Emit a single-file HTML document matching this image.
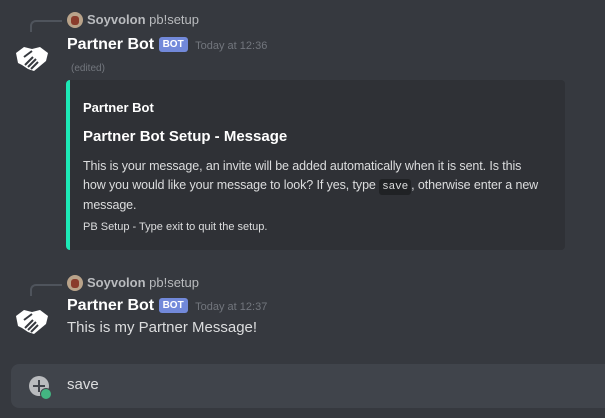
<!DOCTYPE html>
<html><head><style>
body{margin:0;width:605px;height:418px;background:#36393f;font-family:"Liberation Sans",sans-serif;position:relative;overflow:hidden;color:#dcddde}
.a{position:absolute;white-space:nowrap}
.ref{border-left:2px solid #4f545c;border-top:2px solid #4f545c;border-top-left-radius:6px;width:30px;height:10px;position:absolute}
.av{width:16px;height:16px;border-radius:50%;background:#b9a38a;position:absolute;overflow:hidden}
.av:after{content:"";position:absolute;left:4px;top:4px;width:8px;height:9px;background:#8a3c2c;border-radius:3px}
.bot{background:#7289da;color:#fff;font-size:10px;border-radius:3px;padding:1px 4px;display:inline-block;line-height:13px}
</style></head><body>
<div class="ref" style="left:30px;top:20px"></div>
<div class="av" style="left:67px;top:12px"></div>
<div class="a" style="left:87px;top:12px;font-size:13px;color:#b9bbbe"><b>Soyvolon</b> pb!setup</div>
<svg class="a" style="left:12px;top:43px" width="40" height="30" viewBox="0 0 40 30"><path d="M4 10 L12 4 L20 6 L28 4 L36 10 L34 18 L22 28 L16 26 L10 22 L6 20 Z" fill="#fff"/><path d="M12 14 L20 8 M16 24 L24 16 M19 26 L26 19 M13 22 L21 14" stroke="#36393f" stroke-width="2"/></svg>
<div class="a" style="left:67px;top:36px;font-size:16px;font-weight:bold;color:#fff">Partner Bot <span class="bot" style="vertical-align:2px">BOT</span> <span style="font-size:11px;color:#72767d;font-weight:normal;margin-left:3px">Today at 12:36</span></div>
<div class="a" style="left:71px;top:63px;font-size:10px;color:#72767d">(edited)</div>
<div class="a" style="left:66px;top:80px;width:499px;height:170px;background:#2f3136;border-left:4px solid #1de9b6;border-radius:4px;box-sizing:border-box"></div>
<div class="a" style="left:83px;top:100px;font-size:13px;font-weight:bold;color:#fff">Partner Bot</div>
<div class="a" style="left:83px;top:128px;font-size:15px;font-weight:bold;color:#fff">Partner Bot Setup - Message</div>
<div class="a" style="left:83px;top:157px;font-size:12.5px;line-height:18.5px;white-space:normal;width:460px;letter-spacing:-0.1px">This is your message, an invite will be added automatically when it is sent. Is this how you would like your message to look? If yes, type <span style="background:#202225;font-family:'Liberation Mono',monospace;font-size:11px;padding:2px 3px;border-radius:3px">save</span>, otherwise enter a new message.</div>
<div class="a" style="left:83px;top:221px;font-size:11px;color:#dcddde">PB Setup - Type exit to quit the setup.</div>
<div class="ref" style="left:30px;top:284px"></div>
<div class="av" style="left:67px;top:275px"></div>
<div class="a" style="left:87px;top:275px;font-size:13px;color:#b9bbbe"><b>Soyvolon</b> pb!setup</div>
<svg class="a" style="left:12px;top:306px" width="40" height="30" viewBox="0 0 40 30"><path d="M4 10 L12 4 L20 6 L28 4 L36 10 L34 18 L22 28 L16 26 L10 22 L6 20 Z" fill="#fff"/><path d="M12 14 L20 8 M16 24 L24 16 M19 26 L26 19 M13 22 L21 14" stroke="#36393f" stroke-width="2"/></svg>
<div class="a" style="left:67px;top:297px;font-size:16px;font-weight:bold;color:#fff">Partner Bot <span class="bot" style="vertical-align:2px">BOT</span> <span style="font-size:11px;color:#72767d;font-weight:normal;margin-left:3px">Today at 12:37</span></div>
<div class="a" style="left:67px;top:319px;font-size:15px">This is my Partner Message!</div>
<div class="a" style="left:11px;top:364px;width:610px;height:44px;background:#40444b;border-radius:8px"></div>
<div class="a" style="left:29px;top:376px;width:20px;height:20px;border-radius:50%;background:#b9bbbe"></div>
<div class="a" style="left:33px;top:385px;width:12px;height:2px;background:#40444b"></div>
<div class="a" style="left:38px;top:380px;width:2px;height:12px;background:#40444b"></div>
<div class="a" style="left:40px;top:388px;width:10px;height:10px;border-radius:50%;background:#43b581;border:1px solid #40444b"></div>
<div class="a" style="left:67px;top:376px;font-size:15px">save</div>
</body></html>
